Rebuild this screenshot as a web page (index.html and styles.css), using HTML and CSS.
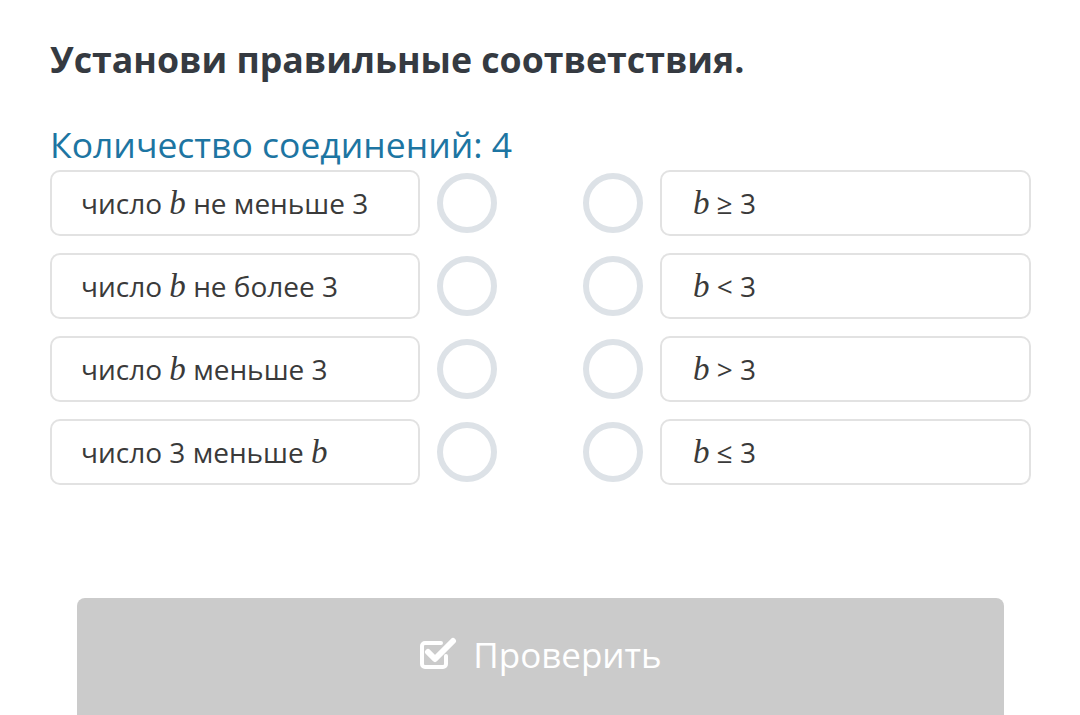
FILE: index.html
```html
<!DOCTYPE html>
<html lang="ru">
<head>
    <meta charset="UTF-8">
    <title>Установи правильные соответствия</title>
    <link rel="stylesheet" href="styles.css">
</head>
<body>
<div class="task">
    <h1 class="task-title">Установи правильные соответствия.</h1>
    <div class="task-count">Количество соединений: 4</div>

    <div class="match-grid">
        <div class="match-row">
            <div class="card">число <i class="mvar">b</i> не меньше 3</div>
            <span class="dot"></span>
            <span class="dot dot-right"></span>
            <div class="card card-right"><i class="mvar">b</i> ≥ 3</div>
        </div>
        <div class="match-row">
            <div class="card">число <i class="mvar">b</i> не более 3</div>
            <span class="dot"></span>
            <span class="dot dot-right"></span>
            <div class="card card-right"><i class="mvar">b</i> &lt; 3</div>
        </div>
        <div class="match-row">
            <div class="card">число <i class="mvar">b</i> меньше 3</div>
            <span class="dot"></span>
            <span class="dot dot-right"></span>
            <div class="card card-right"><i class="mvar">b</i> &gt; 3</div>
        </div>
        <div class="match-row">
            <div class="card">число 3 меньше <i class="mvar">b</i></div>
            <span class="dot"></span>
            <span class="dot dot-right"></span>
            <div class="card card-right"><i class="mvar">b</i> ≤ 3</div>
        </div>
    </div>

    <button class="check-button" disabled>
        <svg class="check-icon" width="38" height="34" viewBox="0 0 38 34">
            <path d="M27 19v8a3 3 0 0 1-3 3H6a3 3 0 0 1-3-3V9a3 3 0 0 1 3-3h16" fill="none" stroke="#fff" stroke-width="4" stroke-linecap="round"/>
            <path d="M9 15l7 7L34 4" fill="none" stroke="#fff" stroke-width="6" stroke-linecap="round" stroke-linejoin="round"/>
        </svg>
        <span>Проверить</span>
    </button>
</div>
</body>
</html>
```

FILE: styles.css
```css
:root {
    --text-dark: #353a41;
    --text-card: #3a3a3a;
    --accent: #1d75a2;
    --card-border: #e2e2e2;
    --dot-border: #dde2e7;
    --button-off: #cbcbcb;
}

* {
    box-sizing: border-box;
}

html, body {
    margin: 0;
    padding: 0;
    background: #fff;
    overflow: hidden;
}

body {
    font-family: 'Open Sans', 'Noto Sans', sans-serif;
    color: var(--text-dark);
}

.task {
    padding: 36px 49px 0 50px;
}

.task-title {
    margin: 0;
    font-size: 35.7px;
    font-weight: 700;
    line-height: 46px;
    color: var(--text-dark);
}

.task-count {
    margin-top: 41px;
    font-size: 35.5px;
    line-height: 42px;
    color: var(--accent);
}

.match-grid {
    display: flex;
    flex-direction: column;
    gap: 17px;
    margin-top: 5px;
}

.match-row {
    display: flex;
    align-items: center;
}

.card {
    flex: 0 0 370px;
    height: 66px;
    border: 2px solid var(--card-border);
    border-radius: 10px;
    padding: 0 0 0 29px;
    display: flex;
    align-items: center;
    font-size: 28px;
    color: var(--text-card);
    white-space: pre;
}

.card-right {
    flex-basis: 371px;
    padding-left: 31px;
    margin-left: 17px;
}

.mvar {
    font-family: 'Liberation Serif', 'DejaVu Serif', serif;
    font-style: italic;
    font-size: 33px;
}

.dot {
    flex: 0 0 60px;
    height: 60px;
    margin-left: 17px;
    border: 6px solid var(--dot-border);
    border-radius: 50%;
}

.dot-right {
    margin-left: 86px;
}

.check-button {
    display: flex;
    align-items: center;
    justify-content: center;
    gap: 16px;
    width: 927px;
    height: 130px;
    margin: 113px 0 0 27px;
    padding: 0 0 18px;
    border: none;
    border-radius: 8px;
    background: var(--button-off);
    color: #fff;
    font-family: inherit;
    font-size: 35px;
}

.check-icon {
    display: block;
}
```
